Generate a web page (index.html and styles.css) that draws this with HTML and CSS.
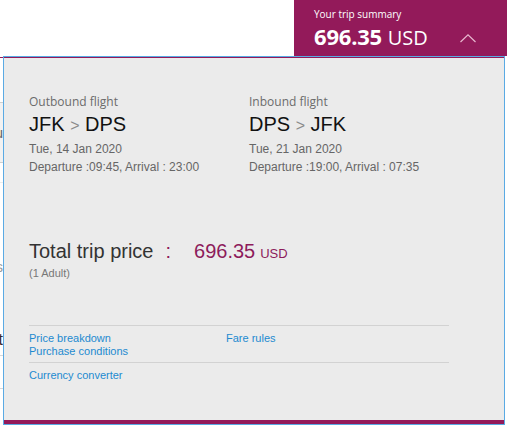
FILE: index.html
```html
<!DOCTYPE html>
<html lang="en">
<head>
<meta charset="utf-8">
<title>Your trip summary</title>
<link rel="stylesheet" href="styles.css">
</head>
<body>
<header class="topbar">
  <div class="summary">
    <div class="summary-label">Your trip summary</div>
    <div class="summary-row">
      <div class="summary-amount"><b>696.35</b> <span class="summary-cur">USD</span></div>
      <svg class="chevron" width="18" height="10" viewBox="0 0 18 10" aria-hidden="true">
        <path d="M1.5 9 L9 1.8 L16.5 9" fill="none" stroke="#e8b7cf" stroke-width="1.2"/>
      </svg>
    </div>
  </div>
</header>
<div class="main">
  <div class="backdrop">
    <div class="bd-box"><span class="bd-text bd-u">u</span></div>
    <div class="bd-rule bd-rule-faint"></div>
    <div class="bd-text bd-s">s</div>
    <div class="bd-text bd-t">t</div>
    <div class="bd-rule bd-rule-a"></div>
    <div class="bd-rule bd-rule-b"></div>
  </div>
  <section class="panel">
    <div class="panel-body">
      <div class="flights">
        <div class="flight">
          <div class="flight-label">Outbound flight</div>
          <div class="flight-route">JFK <span class="arrow">&gt;</span> DPS</div>
          <div class="flight-meta">Tue, 14 Jan 2020</div>
          <div class="flight-meta">Departure :09:45, Arrival : 23:00</div>
        </div>
        <div class="flight">
          <div class="flight-label">Inbound flight</div>
          <div class="flight-route">DPS <span class="arrow">&gt;</span> JFK</div>
          <div class="flight-meta">Tue, 21 Jan 2020</div>
          <div class="flight-meta">Departure :19:00, Arrival : 07:35</div>
        </div>
      </div>
      <div class="total">
        <span class="total-label">Total trip price</span>
        <span class="total-colon">:</span>
        <span class="total-amount">696.35</span>
        <span class="total-cur">USD</span>
      </div>
      <div class="total-note">(1 Adult)</div>
      <div class="links">
        <div class="links-grid">
          <div class="links-col">
            <a href="#" class="link">Price breakdown</a>
            <a href="#" class="link">Purchase conditions</a>
          </div>
          <div class="links-col">
            <a href="#" class="link">Fare rules</a>
          </div>
        </div>
        <div class="links-row">
          <a href="#" class="link">Currency converter</a>
        </div>
      </div>
    </div>
    <div class="panel-foot"></div>
  </section>
</div>
</body>
</html>
```
FILE: styles.css
```css
html, body {
  margin: 0;
  padding: 0;
  background: #ffffff;
}
body {
  width: 507px;
  height: 425px;
  overflow: hidden;
  font-family: "Liberation Sans", Arial, sans-serif;
}

/* header */
.topbar {
  display: flex;
  justify-content: flex-end;
  height: 56px;
}
.summary {
  width: 193px;
  background: #931a5a;
  color: #ffffff;
  padding: 7px 0 0 20px;
  font-family: "Open Sans", "Liberation Sans", sans-serif;
}
.summary-label {
  font-size: 10px;
  line-height: 14px;
}
.summary-row {
  display: flex;
  align-items: center;
  justify-content: space-between;
  padding-right: 30px;
  margin-top: 2px;
}
.summary-amount {
  font-size: 22px;
  line-height: 26px;
  font-weight: 400;
}
.summary-amount b {
  font-weight: 700;
  letter-spacing: -0.2px;
}
.summary-cur {
  font-size: 20px;
}
.chevron {
  display: block;
  margin-top: 1px;
}

/* main area */
.main {
  display: flex;
  align-items: flex-start;
}
.backdrop {
  width: 3px;
  height: 369px;
  overflow: hidden;
  border-top: 1px solid #931a5a;
  margin-top: 1px;
  box-sizing: border-box;
}
.bd-box {
  margin-top: 44px;
  height: 59px;
  border-top: 1px solid #cfcfcf;
  border-bottom: 1px solid #cfcfcf;
  background: #f2f2f2;
  display: flex;
  align-items: center;
}
.bd-text {
  width: 40px;
  margin-left: -37px;
  text-align: right;
  font-size: 14px;
  line-height: 16px;
  color: #777777;
}
.bd-u {
  display: block;
  color: #666666;
}
.bd-rule {
  height: 1px;
  background: #d8d8d8;
}
.bd-rule-faint {
  margin-top: 19px;
  background: #ececec;
}
.bd-s {
  margin-top: 76px;
  color: #999999;
}
.bd-t {
  margin-top: 57px;
  font-size: 16px;
  color: #3a2a2a;
}
.bd-rule-a {
  margin-top: 7px;
}
.bd-rule-b {
  margin-top: 32px;
}

.panel {
  width: 500px;
  height: 367px;
  border: 1px solid #5aaae4;
  display: flex;
  flex-direction: column;
  background: #ebebeb;
}
.panel-body {
  flex: 1;
  border-top: 1px solid #931a5a;
  padding: 36px 0 0 25px;
}
.panel-foot {
  height: 4px;
  background: #931a5a;
}

.flights {
  display: flex;
}
.flight {
  width: 220px;
}
.flight-label {
  font-family: "Open Sans", "Liberation Sans", sans-serif;
  font-size: 12px;
  line-height: 16px;
  color: #6b6b6b;
}
.flight-route {
  margin-top: 2px;
  font-size: 20px;
  line-height: 24px;
  color: #111111;
}
.arrow {
  font-size: 16px;
  color: #8a8a8a;
}
.flight-meta {
  font-size: 12px;
  line-height: 18px;
  color: #666666;
}
.flight-label + .flight-route + .flight-meta {
  margin-top: 2px;
}

.total {
  margin-top: 63px;
  display: flex;
  align-items: baseline;
  line-height: 24px;
}
.total-label {
  font-size: 20px;
  color: #333333;
}
.total-colon {
  font-size: 20px;
  color: #8d1b5b;
  margin-left: 12px;
}
.total-amount {
  font-size: 20px;
  color: #8d1b5b;
  margin-left: 23px;
}
.total-cur {
  font-size: 13px;
  color: #8d1b5b;
  margin-left: 5px;
}
.total-note {
  margin-top: 0;
  font-size: 11px;
  line-height: 14px;
  color: #777777;
}

.links {
  margin-top: 45px;
  width: 420px;
}
.links-grid {
  display: flex;
  border-top: 1px solid #d2d2d2;
  border-bottom: 1px solid #d2d2d2;
  padding: 6px 0 4px;
}
.links-col {
  width: 197px;
  display: flex;
  flex-direction: column;
}
.links-row {
  padding-top: 6px;
}
.link {
  display: block;
  width: max-content;
  font-size: 11px;
  line-height: 13px;
  color: #1d8ad0;
  text-decoration: none;
}
```
